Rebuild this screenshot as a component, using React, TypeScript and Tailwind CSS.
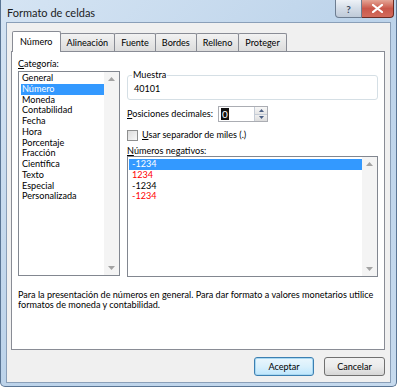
import React from 'react';

const categorias = [
  'General',
  'Número',
  'Moneda',
  'Contabilidad',
  'Fecha',
  'Hora',
  'Porcentaje',
  'Fracción',
  'Científica',
  'Texto',
  'Especial',
  'Personalizada',
];

const negativos = [
  { text: '-1234', red: false },
  { text: '1234', red: true },
  { text: '-1234', red: false },
  { text: '-1234', red: true },
];

function ScrollBar() {
  // disabled vertical scrollbar with grey arrows
  return (
    <div className="flex w-[15px] flex-col items-center justify-between bg-[#f4f4f4] py-[5px]">
      <svg width="7" height="4" viewBox="0 0 7 4">
        <path d="M0 4 L3.5 0 L7 4 Z" fill="#a3a3a3" />
      </svg>
      <svg width="7" height="4" viewBox="0 0 7 4">
        <path d="M0 0 L3.5 4 L7 0 Z" fill="#a3a3a3" />
      </svg>
    </div>
  );
}

function Tab({ label, active }: { label: string; active?: boolean }) {
  if (active) {
    return (
      <div className="relative z-10 -mr-px mb-[-1px] flex h-[21px] items-center rounded-t-[2px] border border-b-0 border-[#898c95] bg-white px-[7px]">
        {label}
      </div>
    );
  }
  return (
    <div className="-mr-px flex h-[18px] items-center rounded-t-[2px] border border-b-0 border-[#898c95] bg-gradient-to-b from-[#f2f2f2] to-[#dcdcdc] px-[6px]">
      {label}
    </div>
  );
}

export default function App() {
  return (
    <div
      className="h-[389px] w-[400px] overflow-hidden bg-white text-[9.1px] text-black"
      style={{ fontFamily: 'Lato, "Noto Sans", sans-serif' }}
    >
      <div className="flex h-[387px] w-[397px] flex-col rounded-b-[5px] border border-t-0 border-[#5a7594] bg-gradient-to-br from-[#d5e4f3] via-[#bcd3ea] to-[#c6daee]">
        {/* title bar */}
        <div className="flex h-[22px] items-start justify-between pl-[6px] pr-[2px]">
          <span className="mt-[7px] text-[11px] leading-none text-[#1c1c1c]">Formato de celdas</span>
          <div className="flex">
            <div className="flex h-[18px] w-[27px] items-center justify-center rounded-bl-[4px] border border-t-0 border-[#6d7d91] bg-gradient-to-b from-[#eef2f7] via-[#d3dce7] to-[#bfcad8] text-[10px] font-bold leading-none text-[#3b4a5e]">
              ?
            </div>
            <div className="flex h-[18px] w-[32px] items-center justify-center rounded-br-[4px] border border-l-0 border-t-0 border-[#6b2a22] bg-gradient-to-b from-[#e4a596] via-[#c9574a] to-[#d36b5c]">
              <svg width="11" height="9" viewBox="0 0 11 9">
                <path d="M1 1 L10 8 M10 1 L1 8" stroke="#ffffff" strokeWidth="2.2" strokeLinecap="square" />
              </svg>
            </div>
          </div>
        </div>

        {/* client area */}
        <div className="mx-[5px] mb-[3px] flex flex-1 flex-col border border-[#8a9fb8] bg-[#f0f0f0] pl-[4px] pr-[5px] pt-[8px]">
          {/* tabs */}
          <div className="flex items-end pl-px leading-none">
            <Tab label="Número" active />
            <Tab label="Alineación" />
            <Tab label="Fuente" />
            <Tab label="Bordes" />
            <Tab label="Relleno" />
            <Tab label="Proteger" />
          </div>

          {/* tab panel */}
          <div className="flex h-[299px] flex-col border border-[#898c95] bg-white px-[6px] pt-[7px] leading-[10.75px]">
            <div className="flex gap-[7px]">
              {/* category list */}
              <div className="flex w-[102px] flex-col">
                <div className="h-[12px]">
                  <u>C</u>ategoría:
                </div>
                <div className="flex h-[205px] border border-[#828790] bg-white">
                  <div className="flex-1 pl-[2px] pt-px">
                    {categorias.map((c) => (
                      <div
                        key={c}
                        className={
                          c === 'Número'
                            ? 'bg-[#3399ff] pl-px text-white'
                            : 'pl-px'
                        }
                      >
                        {c}
                      </div>
                    ))}
                  </div>
                  <ScrollBar />
                </div>
              </div>

              {/* right column */}
              <div className="flex flex-1 flex-col pt-[11px]">
                <fieldset className="h-[30px] rounded-[3px] border border-[#d5dfe5] pl-[6px]">
                  <legend className="-ml-[2px] px-px leading-[10px]">Muestra</legend>
                  <div className="pt-[4px] leading-[10px]">40101</div>
                </fieldset>

                <div className="mt-[6px] flex h-[16px] items-center whitespace-nowrap">
                  <span className="w-[91px]">
                    <u>P</u>osiciones decimales:
                  </span>
                  <div className="flex h-[16px] w-[50px] border border-[#abadb3] bg-white">
                    <div className="flex flex-1 items-center pl-[2px]">
                      <span className="bg-[#111111] px-px text-[10px] leading-[12px] text-white">0</span>
                    </div>
                    <div className="flex w-[13px] flex-col border-l border-[#c5ccd6]">
                      <div className="flex flex-1 items-center justify-center border-b border-[#c5ccd6] bg-gradient-to-b from-[#f7f7f7] to-[#e5e5e5]">
                        <svg width="5" height="3" viewBox="0 0 5 3">
                          <path d="M0 3 L2.5 0 L5 3 Z" fill="#4d6185" />
                        </svg>
                      </div>
                      <div className="flex flex-1 items-center justify-center bg-gradient-to-b from-[#f0f0f0] to-[#dcdcdc]">
                        <svg width="5" height="3" viewBox="0 0 5 3">
                          <path d="M0 0 L2.5 3 L5 0 Z" fill="#4d6185" />
                        </svg>
                      </div>
                    </div>
                  </div>
                </div>

                <div className="mt-[8px] flex h-[11px] items-center gap-[4px] whitespace-nowrap">
                  <div className="h-[11px] w-[11px] border border-[#8e8f8f] bg-gradient-to-br from-[#dcdcdc] to-[#f8f8f8]" />
                  <span>
                    <u>U</u>sar separador de miles (.)
                  </span>
                </div>

                <div className="mt-[5px] h-[10px] leading-[10px]">
                  <u>N</u>úmeros negativos:
                </div>
                <div className="flex h-[121px] border border-[#828790] bg-white">
                  <div className="flex-1 pl-px pt-[2px]">
                    {negativos.map((n, i) => (
                      <div
                        key={i}
                        className={
                          i === 0
                            ? 'bg-[#3399ff] pl-[3px] text-white'
                            : n.red
                              ? 'pl-[3px] text-[#ff0000]'
                              : 'pl-[3px]'
                        }
                      >
                        {n.text}
                      </div>
                    ))}
                  </div>
                  <ScrollBar />
                </div>
              </div>
            </div>

            <p className="mt-[13px] leading-[10px]">
              Para la presentación de números en general. Para dar formato a valores monetarios utilice formatos de moneda y contabilidad.
            </p>
          </div>

          {/* buttons */}
          <div className="mt-[7px] flex justify-end gap-[10px] leading-none">
            <button className="flex h-[19px] w-[60px] items-center justify-center rounded-[3px] border border-[#3c7fb1] bg-gradient-to-b from-[#eaf6fd] via-[#d9f0fc] to-[#bee6fd] shadow-[inset_0_0_0_1px_#a8d8f2]">
              Aceptar
            </button>
            <button className="flex h-[19px] w-[61px] items-center justify-center rounded-[3px] border border-[#707070] bg-gradient-to-b from-[#f2f2f2] via-[#ebebeb] to-[#d6d6d6]">
              Cancelar
            </button>
          </div>
        </div>
      </div>
    </div>
  );
}
